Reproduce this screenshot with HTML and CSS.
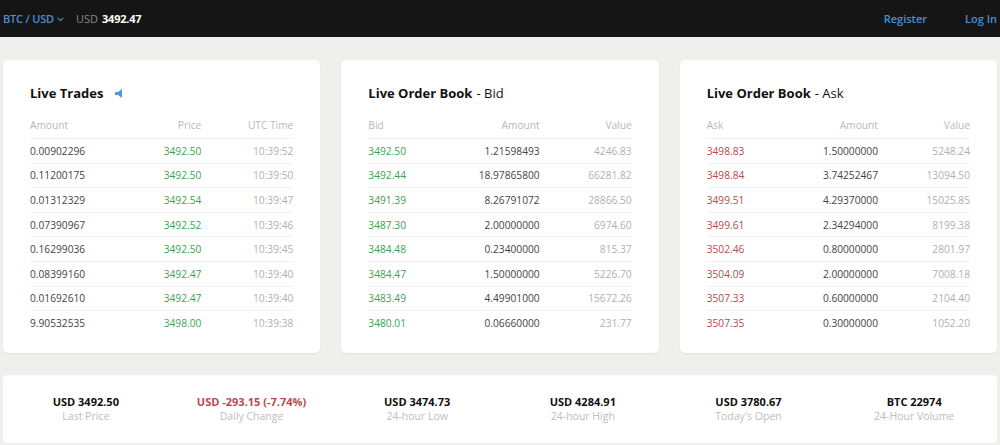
FILE: index.html
```html
<!DOCTYPE html>
<html>
<head>
<meta charset="utf-8">
<link rel="stylesheet" href="styles.css">
</head>
<body>
<header class="topbar">
  <div class="pair">
    <span class="pair-name">BTC / USD</span>
    <svg class="chev" width="7" height="5" viewBox="0 0 7 5"><path d="M0.7 0.8 L3.5 3.6 L6.3 0.8" fill="none" stroke="#4a8fd6" stroke-width="1.1"/></svg>
    <span class="cur">USD</span><span class="last">3492.47</span>
  </div>
  <nav class="auth">
    <a class="link">Register</a>
    <a class="link">Log In</a>
  </nav>
</header>

<main class="content">
  <section class="cards">
    <div class="card">
      <h2 class="title">Live Trades
        <svg class="speaker" width="8" height="9" viewBox="0 0 8 9"><path d="M0 3 H3 L7 0 V9 L3 6 H0 Z" fill="#4a9ae0"/></svg>
      </h2>
      <div class="row head"><span>Amount</span><span class="r">Price</span><span class="r">UTC Time</span></div>
      <div class="row"><span class="dark">0.00902296</span><span class="r green">3492.50</span><span class="r grey">10:39:52</span></div>
      <div class="row"><span class="dark">0.11200175</span><span class="r green">3492.50</span><span class="r grey">10:39:50</span></div>
      <div class="row"><span class="dark">0.01312329</span><span class="r green">3492.54</span><span class="r grey">10:39:47</span></div>
      <div class="row"><span class="dark">0.07390967</span><span class="r green">3492.52</span><span class="r grey">10:39:46</span></div>
      <div class="row"><span class="dark">0.16299036</span><span class="r green">3492.50</span><span class="r grey">10:39:45</span></div>
      <div class="row"><span class="dark">0.08399160</span><span class="r green">3492.47</span><span class="r grey">10:39:40</span></div>
      <div class="row"><span class="dark">0.01692610</span><span class="r green">3492.47</span><span class="r grey">10:39:40</span></div>
      <div class="row"><span class="dark">9.90532535</span><span class="r green">3498.00</span><span class="r grey">10:39:38</span></div>
    </div>

    <div class="card">
      <h2 class="title">Live Order Book <span class="sub">- Bid</span></h2>
      <div class="row head"><span>Bid</span><span class="r">Amount</span><span class="r">Value</span></div>
      <div class="row"><span class="green">3492.50</span><span class="r dark">1.21598493</span><span class="r grey">4246.83</span></div>
      <div class="row"><span class="green">3492.44</span><span class="r dark">18.97865800</span><span class="r grey">66281.82</span></div>
      <div class="row"><span class="green">3491.39</span><span class="r dark">8.26791072</span><span class="r grey">28866.50</span></div>
      <div class="row"><span class="green">3487.30</span><span class="r dark">2.00000000</span><span class="r grey">6974.60</span></div>
      <div class="row"><span class="green">3484.48</span><span class="r dark">0.23400000</span><span class="r grey">815.37</span></div>
      <div class="row"><span class="green">3484.47</span><span class="r dark">1.50000000</span><span class="r grey">5226.70</span></div>
      <div class="row"><span class="green">3483.49</span><span class="r dark">4.49901000</span><span class="r grey">15672.26</span></div>
      <div class="row"><span class="green">3480.01</span><span class="r dark">0.06660000</span><span class="r grey">231.77</span></div>
    </div>

    <div class="card">
      <h2 class="title">Live Order Book <span class="sub">- Ask</span></h2>
      <div class="row head"><span>Ask</span><span class="r">Amount</span><span class="r">Value</span></div>
      <div class="row"><span class="red">3498.83</span><span class="r dark">1.50000000</span><span class="r grey">5248.24</span></div>
      <div class="row"><span class="red">3498.84</span><span class="r dark">3.74252467</span><span class="r grey">13094.50</span></div>
      <div class="row"><span class="red">3499.51</span><span class="r dark">4.29370000</span><span class="r grey">15025.85</span></div>
      <div class="row"><span class="red">3499.61</span><span class="r dark">2.34294000</span><span class="r grey">8199.38</span></div>
      <div class="row"><span class="red">3502.46</span><span class="r dark">0.80000000</span><span class="r grey">2801.97</span></div>
      <div class="row"><span class="red">3504.09</span><span class="r dark">2.00000000</span><span class="r grey">7008.18</span></div>
      <div class="row"><span class="red">3507.33</span><span class="r dark">0.60000000</span><span class="r grey">2104.40</span></div>
      <div class="row"><span class="red">3507.35</span><span class="r dark">0.30000000</span><span class="r grey">1052.20</span></div>
    </div>
  </section>

  <section class="stats">
    <div class="stat"><div class="val">USD 3492.50</div><div class="lbl">Last Price</div></div>
    <div class="stat"><div class="val neg">USD -293.15 (-7.74%)</div><div class="lbl">Daily Change</div></div>
    <div class="stat"><div class="val">USD 3474.73</div><div class="lbl">24-hour Low</div></div>
    <div class="stat"><div class="val">USD 4284.91</div><div class="lbl">24-hour High</div></div>
    <div class="stat"><div class="val">USD 3780.67</div><div class="lbl">Today's Open</div></div>
    <div class="stat"><div class="val">BTC 22974</div><div class="lbl">24-Hour Volume</div></div>
  </section>
</main>
</body>
</html>
```
FILE: styles.css
```css
* { box-sizing: border-box; }
html, body { margin: 0; padding: 0; }
body {
  background: #efefee;
  font-family: "Open Sans", "Liberation Sans", sans-serif;
  color: #333;
  width: 1000px;
  height: 445px;
  overflow: hidden;
}
.topbar {
  height: 37px;
  background: #151515;
  display: flex;
  align-items: center;
  justify-content: space-between;
  padding: 0 3px 0 3px;
  font-size: 11px;
}
.pair { display: flex; align-items: center; }
.pair-name { color: #4a8fd6; font-weight: 600; letter-spacing: -0.2px; }
.chev { margin: 1px 0 0 3px; }
.cur { color: #8a8a8a; margin-left: 12px; }
.last { color: #fff; font-weight: 700; margin-left: 4px; letter-spacing: -0.2px; }
.auth { display: flex; gap: 38px; }
.link { color: #4a8fd6; font-weight: 600; font-size: 11px; }

.content { padding: 23px 3px 0 3px; }
.cards { display: flex; gap: 21px; }
.card {
  flex: 1;
  background: #fff;
  border-radius: 5px;
  height: 293px;
  padding: 24px 27px 0 27px;
  box-shadow: 0 1px 2px rgba(0,0,0,0.06);
}
.title {
  margin: 0 0 16px 0;
  font-size: 13px;
  line-height: 18px;
  font-weight: 700;
  color: #111;
  display: flex;
  align-items: center;
}
.title .sub { font-weight: 400; margin-left: 4px; }
.speaker { margin-left: 12px; }
.row {
  display: grid;
  grid-template-columns: 1fr 1fr 92px;
  font-size: 10.2px;
  height: 24.6px;
  align-items: center;
  border-top: 1px solid #f1f1f1;
}
.row.head { border-top: none; color: #b8b8b8; height: 20px; align-items: start; padding-top: 0; }
.r { text-align: right; }
.dark { color: #444; }
.grey { color: #b0b0b0; }
.green { color: #3ba34f; }
.red { color: #b94a4a; }

.stats {
  margin-top: 22px;
  height: 68px;
  background: #fff;
  border-radius: 5px;
  display: grid;
  grid-template-columns: repeat(6, 1fr);
  align-items: center;
  padding-bottom: 1px;
}
.stat { text-align: center; }
.val { font-size: 11px; font-weight: 700; color: #111; line-height: 14px; }
.val.neg { color: #b94a4a; }
.lbl { font-size: 10.5px; color: #bdbdbd; line-height: 14px; }
```
